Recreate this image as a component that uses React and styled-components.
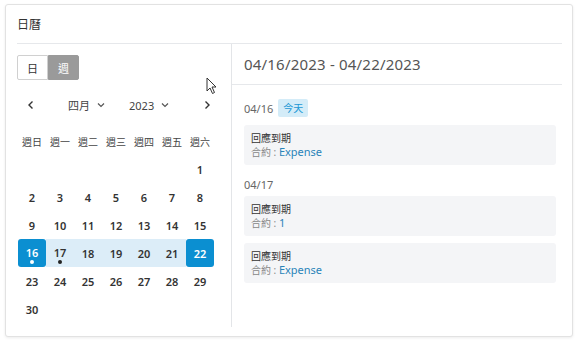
import React from 'react';
import styled, { createGlobalStyle } from 'styled-components';

const GlobalStyle = createGlobalStyle`
  body {
    margin: 0;
    background: #ffffff;
    font-family: "Noto Sans", "Noto Sans CJK TC", sans-serif;
    color: #333;
  }
`;

const Page = styled.div`
  padding: 4px 4px 4px 5px;
  position: relative;
`;

const Card = styled.div`
  width: 568px;
  height: 333px;
  box-sizing: border-box;
  border: 1px solid #e2e2e2;
  border-radius: 3px;
  box-shadow: 0 1px 3px rgba(0, 0, 0, 0.08);
  background: #fff;
  display: flex;
  flex-direction: column;
`;

const CardHeader = styled.div`
  margin: 0 10px 0 11px;
  height: 38px;
  display: flex;
  align-items: center;
  border-bottom: 1px solid #e6e8eb;
  font-size: 12px;
  color: #333;
`;

const Body = styled.div`
  display: flex;
  margin: 0 10px 0 11px;
  height: 283px;
`;

const LeftCol = styled.div`
  width: 215px;
  border-right: 1px solid #e3e5e8;
  display: flex;
  flex-direction: column;
  padding-top: 11px;
  box-sizing: border-box;
`;

const Toggle = styled.div`
  display: flex;
  height: 25px;
`;

const ToggleBtn = styled.div`
  width: 31px;
  box-sizing: border-box;
  display: flex;
  align-items: center;
  justify-content: center;
  font-size: 11px;
  border: 1px solid ${(p) => (p.active ? '#9a9a9a' : '#d0d0d0')};
  background: ${(p) => (p.active ? '#9a9a9a' : '#fff')};
  color: ${(p) => (p.active ? '#fff' : '#333')};
  border-radius: ${(p) => (p.first ? '2px 0 0 2px' : '0 2px 2px 0')};
`;

const Nav = styled.div`
  display: flex;
  align-items: center;
  height: 26px;
  margin-top: 12px;
  font-size: 11px;
  color: #444;
`;

const Arrow = styled.div`
  width: 28px;
  display: flex;
  justify-content: center;
  margin-left: ${(p) => p.ml || 0}px;
`;

const Select = styled.div`
  display: flex;
  align-items: center;
  gap: 7px;
  margin-left: ${(p) => p.ml}px;
`;

const Grid = styled.div`
  display: grid;
  grid-template-columns: repeat(7, 28px);
  grid-auto-rows: 28px;
  margin-top: 9px;
  margin-left: 1px;
`;

const WeekDay = styled.div`
  display: flex;
  align-items: center;
  justify-content: center;
  font-size: 10px;
  color: #444;
`;

const Day = styled.div`
  position: relative;
  display: flex;
  align-items: center;
  justify-content: center;
  padding-bottom: ${(p) => (p.marked ? '2px' : '0')};
  box-sizing: border-box;
  font-size: 11px;
  font-weight: 600;
  color: ${(p) => (p.edge ? '#fff' : '#333')};
  background: ${(p) => (p.edge ? '#0b8fd1' : p.inRange ? '#dcedf8' : 'transparent')};
  border-radius: ${(p) => (p.edge ? '3px' : '0')};
`;

const Dot = styled.span`
  position: absolute;
  bottom: 3px;
  left: 50%;
  margin-left: -2px;
  width: 4px;
  height: 4px;
  border-radius: 50%;
  background: ${(p) => (p.light ? '#fff' : '#222')};
`;

const RightCol = styled.div`
  flex: 1;
  display: flex;
  flex-direction: column;
`;

const RangeHeader = styled.div`
  height: 40px;
  padding-left: 12px;
  display: flex;
  align-items: center;
  border-bottom: 1px solid #e6e8eb;
  font-size: 15px;
  color: #555;
  letter-spacing: 0.2px;
`;

const Events = styled.div`
  padding: 14px 6px 0 12px;
  display: flex;
  flex-direction: column;
`;

const DateRow = styled.div`
  display: flex;
  align-items: center;
  gap: 5px;
  height: 18px;
  font-size: 11px;
  color: #666;
  margin-top: ${(p) => p.mt || 0}px;
`;

const Badge = styled.span`
  background: #d4ecf8;
  color: #1c98d5;
  font-size: 10px;
  padding: 0 5px;
  height: 18px;
  line-height: 18px;
  border-radius: 2px;
`;

const EventCard = styled.div`
  background: #f4f5f7;
  border-radius: 3px;
  height: 40px;
  box-sizing: border-box;
  padding: 6px 7px;
  margin-top: ${(p) => p.mt}px;
  display: flex;
  flex-direction: column;
  justify-content: center;
`;

const EventTitle = styled.div`
  font-size: 10px;
  color: #333;
  line-height: 14px;
`;

const EventSub = styled.div`
  font-size: 10px;
  color: #888;
  line-height: 14px;
  span {
    color: #2a84b9;
    font-size: 11px;
  }
`;

const Cursor = styled.svg`
  position: absolute;
  left: 206px;
  top: 77px;
`;

const Chevron = ({ dir }) => (
  <svg width="8" height="10" viewBox="0 0 8 10">
    <path
      d={dir === 'left' ? 'M5.5 1.5 L2 5 L5.5 8.5' : 'M2.5 1.5 L6 5 L2.5 8.5'}
      fill="none"
      stroke="#333"
      strokeWidth="1.4"
    />
  </svg>
);

const Caret = () => (
  <svg width="8" height="6" viewBox="0 0 8 6">
    <path d="M1 1.5 L4 4.5 L7 1.5" fill="none" stroke="#555" strokeWidth="1.2" />
  </svg>
);

const weekDays = ['週日', '週一', '週二', '週三', '週四', '週五', '週六'];

const events = [
  { date: '04/16', today: true, items: ['Expense'] },
  { date: '04/17', items: ['1', 'Expense'] },
];

function App() {
  const cells = [];
  for (let i = 0; i < 6; i += 1) cells.push(null);
  for (let d = 1; d <= 30; d += 1) cells.push(d);

  return (
    <Page>
      <GlobalStyle />
      <Card>
        <CardHeader>日曆</CardHeader>
        <Body>
          <LeftCol>
            <Toggle>
              <ToggleBtn first>日</ToggleBtn>
              <ToggleBtn active>週</ToggleBtn>
            </Toggle>
            <Nav>
              <Arrow><Chevron dir="left" /></Arrow>
              <Select ml={23}>四月 <Caret /></Select>
              <Select ml={24}>2023 <Caret /></Select>
              <Arrow ml={24}><Chevron dir="right" /></Arrow>
            </Nav>
            <Grid>
              {weekDays.map((w) => <WeekDay key={w}>{w}</WeekDay>)}
              {cells.map((d, i) => (
                <Day
                  key={i}
                  edge={d === 16 || d === 22}
                  inRange={d > 16 && d < 22}
                  marked={d === 16 || d === 17}
                >
                  {d}
                  {d === 16 && <Dot light />}
                  {d === 17 && <Dot />}
                </Day>
              ))}
            </Grid>
          </LeftCol>
          <RightCol>
            <RangeHeader>04/16/2023 - 04/22/2023</RangeHeader>
            <Events>
              {events.map((g, gi) => (
                <React.Fragment key={g.date}>
                  <DateRow mt={gi === 0 ? 0 : 10}>
                    {g.date}
                    {g.today && <Badge>今天</Badge>}
                  </DateRow>
                  {g.items.map((it, ii) => (
                    <EventCard key={ii} mt={ii === 0 ? (gi === 0 ? 8 : 3) : 7}>
                      <EventTitle>回應到期</EventTitle>
                      <EventSub>合約 : <span>{it}</span></EventSub>
                    </EventCard>
                  ))}
                </React.Fragment>
              ))}
            </Events>
          </RightCol>
        </Body>
      </Card>
      <Cursor width="12" height="18" viewBox="0 0 12 18">
        <path d="M1 1 L1 14 L4 11 L6.5 16.5 L8.5 15.5 L6 10 L10 10 Z" fill="#fff" stroke="#333" strokeWidth="1" />
      </Cursor>
    </Page>
  );
}

export default App;
